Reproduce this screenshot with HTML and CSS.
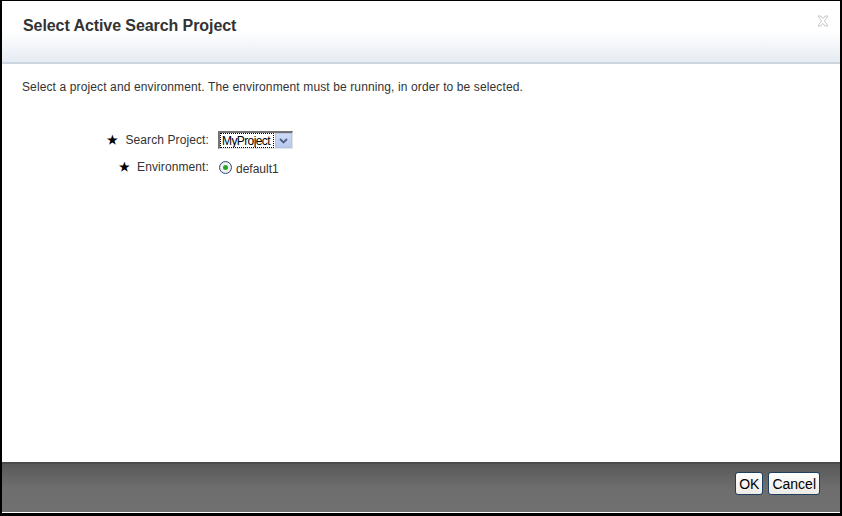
FILE: index.html
```html
<!DOCTYPE html>
<html>
<head>
<meta charset="utf-8">
<link rel="stylesheet" href="styles.css">
</head>
<body>
<div class="dialog">
  <div class="header">
    <h1 class="title">Select Active Search Project</h1>
    <span class="close">
      <svg width="12" height="12" viewBox="0 0 12 12"><path d="M1 1 L4 1 L6 3.5 L8 1 L11 1 L7.5 6 L11 11 L8 11 L6 8.5 L4 11 L1 11 L4.5 6 Z" fill="#fff" stroke="#c8c8c8" stroke-width="1" stroke-linejoin="round"/></svg>
    </span>
  </div>
  <div class="body">
    <p class="desc">Select a project and environment. The environment must be running, in order to be selected.</p>
    <div class="form">
      <div class="row">
        <div class="label"><span class="star">&#9733;</span>Search Project:</div>
        <div class="field">
          <div class="select">
            <span class="sel-text">MyProject</span>
            <span class="sel-btn"><svg width="9" height="6" viewBox="0 0 9 6"><path d="M1 1 L4.5 4.5 L8 1" fill="none" stroke="#4d6185" stroke-width="1.8"/></svg></span>
          </div>
        </div>
      </div>
      <div class="row">
        <div class="label"><span class="star">&#9733;</span>Environment:</div>
        <div class="field">
          <span class="radio"><span class="dot"></span></span><span class="radio-label">default1</span>
        </div>
      </div>
    </div>
  </div>
  <div class="footer">
    <button class="btn">OK</button>
    <button class="btn">Cancel</button>
  </div>
</div>
</body>
</html>
```
FILE: styles.css
```css
html, body { margin: 0; padding: 0; background: #fff; }
body { width: 842px; height: 516px; font-family: "Liberation Sans", Arial, sans-serif; }
.dialog {
  box-sizing: border-box;
  width: 842px; height: 516px;
  border-style: solid; border-color: #000;
  border-width: 1px 2px 3px 2px;
  display: flex; flex-direction: column;
  background: #fff;
}
.header {
  height: 61px;
  border-bottom: 2px solid #cdd5e0;
  background: linear-gradient(to bottom, #ffffff 0px, #ffffff 30px, #e6ebf3 61px);
  display: flex; align-items: flex-start; justify-content: space-between;
}
.title {
  margin: 15px 0 0 21px;
  font-size: 16px; font-weight: bold; color: #333;
  line-height: 19px; letter-spacing: -0.08px;
}
.close { margin: 12px 11px 0 0; display: block; }
.body { flex: 1; }
.desc {
  margin: 16px 0 0 20px;
  font-size: 12px; color: #333; line-height: 14px;
  letter-spacing: 0.12px;
}
.form { margin: 37px 0 0 0; display: flex; flex-direction: column; gap: 9px; }
.row { display: flex; align-items: center; height: 18px; }
.label {
  width: 207px; text-align: right;
  font-size: 12px; color: #333; line-height: 14px;
  box-sizing: border-box; letter-spacing: 0.1px;
}
.star { font-size: 12px; font-weight: bold; color: #000; margin-right: 7px; }
.field { margin-left: 9px; display: flex; align-items: center; }
.select {
  box-sizing: border-box;
  width: 75px; height: 18px;
  border-style: solid; border-width: 2px 1px 1px 2px;
  border-color: #737373 #e4e4e4 #e4e4e4 #737373;
  display: flex; align-items: stretch; background: #fff;
}
.sel-text {
  font-size: 12px; color: #000; letter-spacing: -0.6px;
  line-height: 14px; padding: 0 1px; margin: 1px 2px 0 1px;
  outline: 1px dotted #000; outline-offset: 0; height: 13px;
  width: 50px; overflow: hidden; white-space: nowrap;
}
.sel-btn {
  width: 17px; background: linear-gradient(#cfdbf5, #b8c9ef);
  border: 1px solid #b4c3e6; box-sizing: border-box;
  display: flex; align-items: center; justify-content: center;
}
.radio {
  box-sizing: border-box; width: 13px; height: 13px; border-radius: 50%;
  border: 1px solid #2e4b73;
  background: radial-gradient(#ffffff, #e2e2dc);
  display: flex; align-items: center; justify-content: center;
  margin-left: 1px;
}
.dot { width: 5px; height: 5px; border-radius: 50%; background: #28a428; }
.radio-label { font-size: 12px; color: #333; margin-left: 4px; position: relative; top: 2px; }
.footer {
  border-top: 2px solid #4a4a4a;
  border-bottom: 1px solid #fff;
  background: linear-gradient(to bottom, #595959 0px, #6e6e6e 24px, #707070 49px);
  display: flex; justify-content: flex-end; align-items: flex-start;
  padding: 8px 20px 0 0; gap: 5px;
  box-sizing: border-box; height: 51px;
}
.btn {
  font-family: "Liberation Sans", Arial, sans-serif;
  font-size: 14px; color: #000; line-height: 16px;
  height: 23px; padding: 0 3px;
  border: 1px solid #1f3f62; border-radius: 3px;
  background: linear-gradient(#ffffff, #ecebe6);
  margin: 0;
}
```
